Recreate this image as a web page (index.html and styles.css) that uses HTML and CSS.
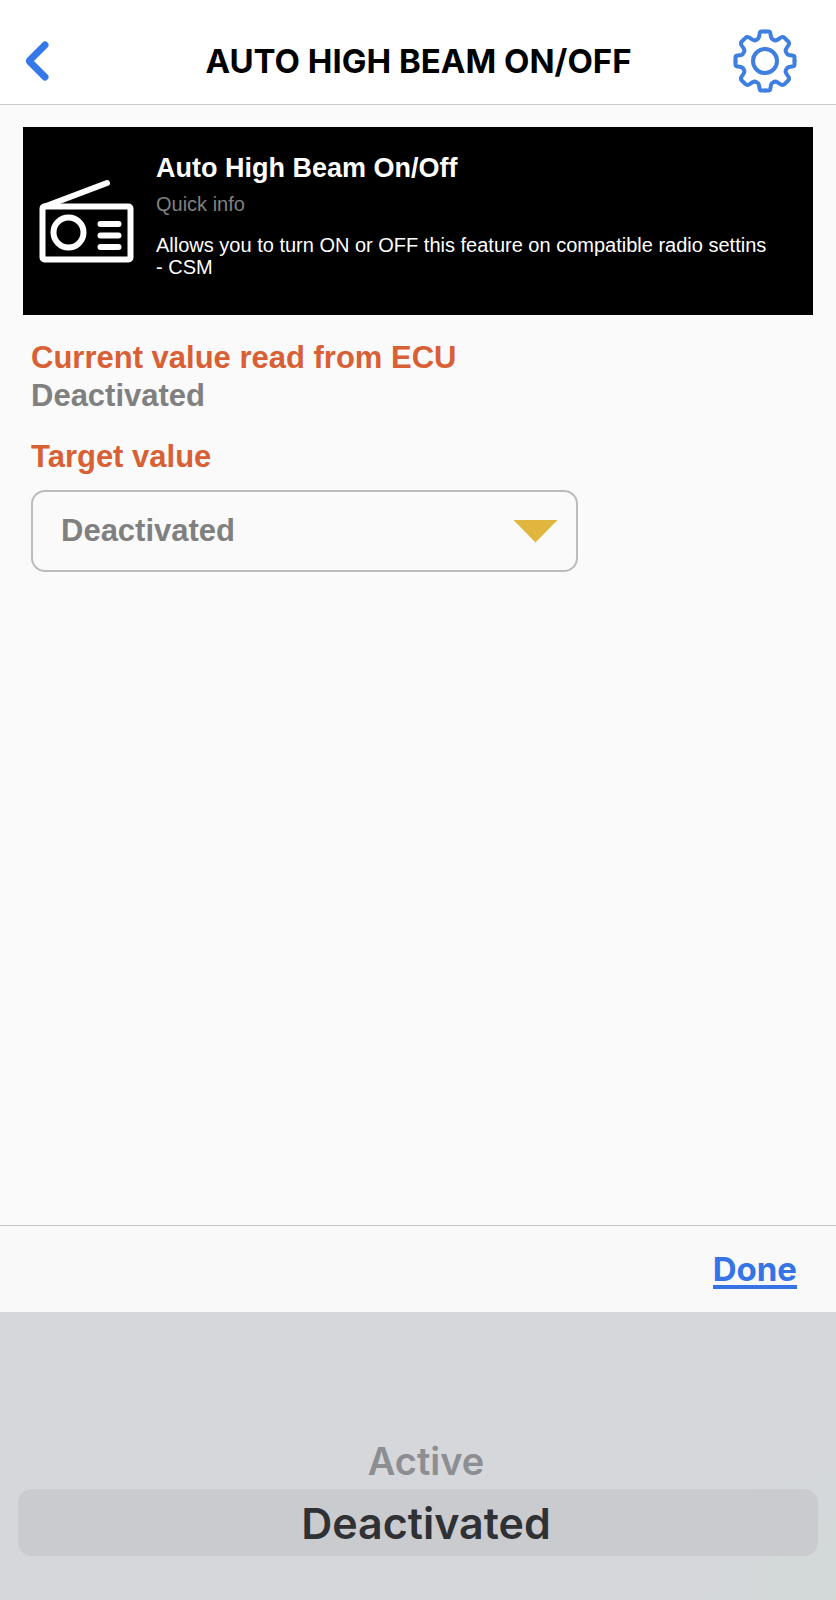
FILE: index.html
```html
<!DOCTYPE html>
<html lang="en">
<head>
    <meta charset="utf-8">
    <meta name="viewport" content="width=device-width, initial-scale=1">
    <title>Auto High Beam On/Off</title>
    <link rel="stylesheet" href="styles.css">
</head>
<body>

<header class="topbar">
    <button class="icon-button" type="button" aria-label="Back">
        <svg class="back-icon" width="26" height="40" viewBox="0 0 26 40" aria-hidden="true">
            <path d="M21 4 L6 19 Q5 20 6 21 L21 36"/>
        </svg>
    </button>
    <h1>AUTO HIGH BEAM ON/OFF</h1>
    <button class="icon-button settings" type="button" aria-label="Settings">
        <svg class="gear-icon" width="64" height="64" viewBox="-32 -32 64 64" aria-hidden="true">
            <defs>
                <path id="gearQuarter" d="M0 -29.5 H4 Q5 -29.5 5.2 -28.5 L6 -24 Q6.5 -22 8.5 -21.2 Q10.5 -20 12.5 -21.3 L16 -23.6 Q18 -24.7 19.5 -23.2 L23.2 -19.5 Q24.7 -18 23.6 -16 L21.3 -12.5 Q20 -10.5 21.2 -8.5 Q22 -6.5 24 -6 L28.5 -5.2 Q29.5 -5 29.5 -4 V0"/>
            </defs>
            <use href="#gearQuarter"/>
            <use href="#gearQuarter" transform="rotate(90)"/>
            <use href="#gearQuarter" transform="rotate(180)"/>
            <use href="#gearQuarter" transform="rotate(270)"/>
            <circle r="12"/>
        </svg>
    </button>
</header>

<main>
    <section class="info-card">
        <svg class="radio-icon" width="96" height="86" viewBox="0 0 96 86" aria-hidden="true">
            <rect x="4.5" y="27.5" width="88" height="53" rx="2"/>
            <circle cx="30.5" cy="53.5" r="15"/>
            <path d="M5.5 28 L69 4"/>
            <path d="M62.5 45 H80.5 M62.5 56.5 H80.5 M62.5 68 H80.5"/>
        </svg>
        <div class="info-text">
            <h2>Auto High Beam On/Off</h2>
            <p class="quick">Quick info</p>
            <p class="description">Allows you to turn ON or OFF this feature on compatible radio settins - CSM</p>
        </div>
    </section>

    <section class="values">
        <h3>Current value read from ECU</h3>
        <p class="current">Deactivated</p>

        <label class="target-label" for="targetValue">Target value</label>
        <div class="select-box">
            <select id="targetValue">
                <option>Active</option>
                <option selected>Deactivated</option>
            </select>
        </div>
    </section>
</main>

<div class="toolbar">
    <button class="done" type="button">Done</button>
</div>

<!-- Picker wheel -->
<div class="picker" role="radiogroup" aria-label="Target value">
    <label class="option">
        <input type="radio" name="pick" value="Active">
        <span>Active</span>
    </label>
    <label class="option">
        <input type="radio" name="pick" value="Deactivated" checked>
        <span>Deactivated</span>
    </label>
</div>

<script>
const target = document.getElementById("targetValue");
const options = document.querySelectorAll(".picker input");

// Keep the drop-down and the wheel on the same value
options.forEach(function(option) {
    option.onchange = function() {
        target.value = option.value;
    };
});

target.onchange = function() {
    options.forEach(function(option) {
        option.checked = option.value === target.value;
    });
};
</script>

</body>
</html>
```
FILE: styles.css
```css
/* General Styles */
* {
    box-sizing: border-box;
}

body {
    display: flex;
    flex-direction: column;
    min-height: 100vh;
    margin: 0;
    background-color: #fafafa;
    font-family: "Liberation Sans", Arial, sans-serif;
}

h1, h2, h3, p {
    margin: 0;
}

button {
    padding: 0;
    border: none;
    background: none;
    cursor: pointer;
}

/* Top Bar */
.topbar {
    display: grid;
    grid-template-columns: 80px 1fr 64px;
    align-items: center;
    padding: 18px 39px 0 24px;
    height: 105px;
    background-color: white;
    border-bottom: 1px solid #c9cbcb;
}

.topbar h1 {
    font-family: Inter, sans-serif;
    font-size: 33px;
    line-height: 40px;
    font-weight: 700;
    text-align: center;
    color: black;
}

.icon-button {
    display: flex;
}

.settings {
    justify-content: flex-end;
}

.back-icon, .gear-icon {
    fill: none;
    stroke: #3478ea;
    stroke-linecap: round;
    stroke-linejoin: round;
}

.back-icon {
    stroke-width: 7;
}

.gear-icon {
    stroke: #3f7fe0;
    stroke-width: 4;
}

/* Info Card */
main {
    flex: 1;
    padding: 22px 23px;
}

.info-card {
    display: flex;
    gap: 22px;
    min-height: 188px;
    padding: 24px 36px 24px 15px;
    background-color: black;
    color: white;
}

.radio-icon {
    flex: none;
    margin-top: 28px;
    fill: none;
    stroke: white;
    stroke-width: 6;
    stroke-linecap: round;
}

.info-text h2 {
    font-size: 27px;
    line-height: 34px;
}

.quick {
    margin-top: 8px;
    font-size: 20px;
    line-height: 22px;
    color: #808080;
}

.description {
    margin-top: 19px;
    font-size: 20px;
    line-height: 22px;
}

/* Values */
.values {
    padding: 24px 8px;
    font-size: 31px;
    line-height: 38px;
    font-weight: 700;
    color: #808080;
}

.values h3, .target-label {
    font-size: 31px;
    color: #d95f35;
}

.target-label {
    display: block;
    margin-top: 23px;
}

.select-box {
    display: grid;
    align-items: center;
    max-width: 547px;
    margin-top: 14px;
}

.select-box select, .select-box::after {
    grid-area: 1 / 1;
}

.select-box select {
    appearance: none;
    width: 100%;
    height: 82px;
    padding: 0 80px 0 28px;
    border: 2px solid #bcbcbc;
    border-radius: 14px;
    background-color: transparent;
    font: inherit;
    color: inherit;
}

.select-box::after {
    content: "";
    justify-self: end;
    width: 45px;
    height: 23px;
    margin-right: 20px;
    background-color: #e0b63c;
    clip-path: polygon(0 0, 100% 0, 50% 100%);
    pointer-events: none;
}

/* Done Toolbar */
.toolbar {
    display: flex;
    justify-content: flex-end;
    align-items: center;
    height: 87px;
    padding: 0 39px;
    border-top: 1px solid #c5c6c8;
    background-color: #f9f9f9;
}

.done {
    padding-top: 3px;
    border-bottom: 4px solid #3673e6;
    font-family: Inter, sans-serif;
    font-size: 33px;
    line-height: 32px;
    font-weight: 700;
    color: #3673e6;
}

/* Picker */
.picker {
    height: 288px;
    padding: 120px 18px 0;
    background: radial-gradient(circle at bottom right, #d2dad8, #d5d7db 140px);
    font-family: Inter, sans-serif;
    font-weight: 600;
}

.option {
    display: flex;
    justify-content: center;
    align-items: center;
    height: 57px;
    padding-left: 16px;
    border-radius: 14px;
    font-size: 38px;
    color: #8d8e92;
    cursor: pointer;
}

.option input {
    appearance: none;
    width: 0;
    height: 0;
    margin: 0;
}

.option:has(input:checked) {
    height: 67px;
    background-color: #cacbcf;
    font-size: 43px;
    color: #303135;
}
```
